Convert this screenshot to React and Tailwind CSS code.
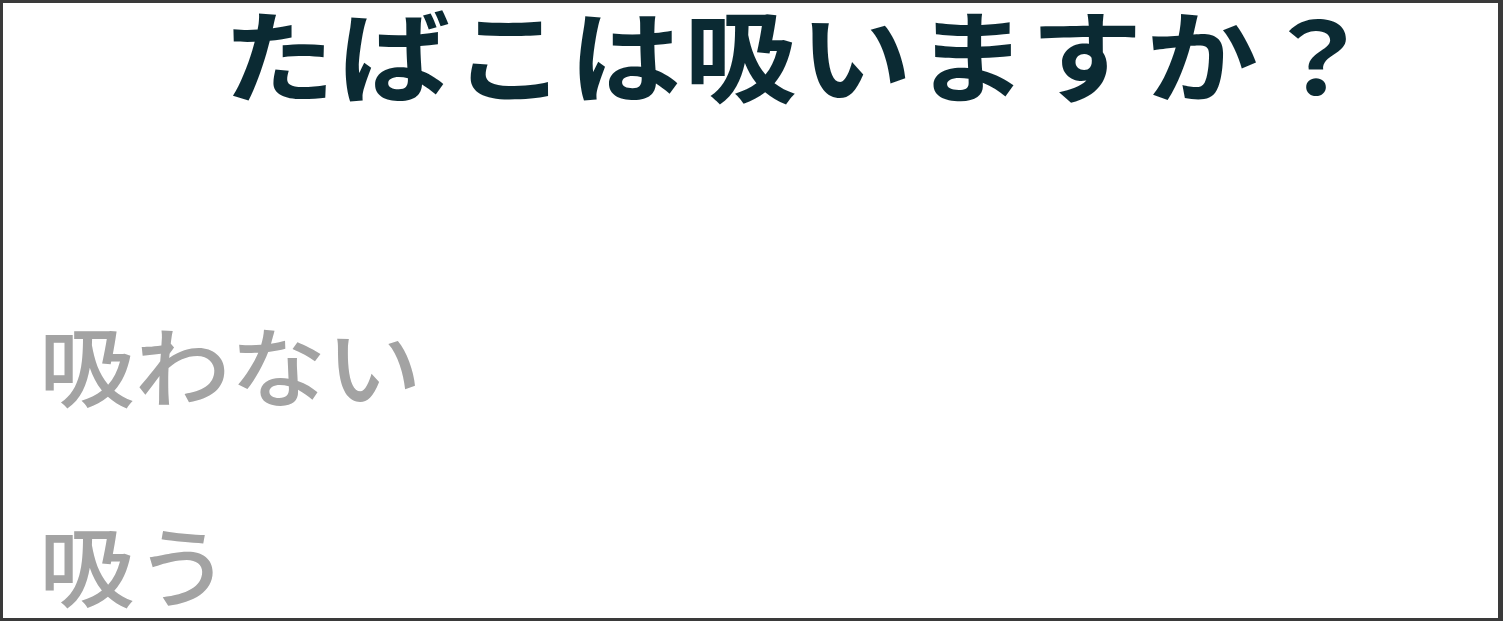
import React from 'react';

const options = ['吸わない', '吸う'];

const App = () => {
  return (
    <div
      className="h-[621px] w-full overflow-hidden bg-white border-t-[3px] border-l-[3px] border-r-[5px] border-b-[3px] border-[#3a3a3a]"
      style={{ fontFamily: '"Noto Sans CJK JP", "Noto Sans", sans-serif' }}
    >
      <h1 className="pl-[220px] h-[104px] text-[100px] leading-[98px] font-semibold text-[#0b2a33]">
        <span className="inline-block origin-left scale-x-[1.12] tracking-[3px] whitespace-nowrap">
          たばこは吸いますか？
        </span>
      </h1>
      <ul className="mt-[213px] pl-[36px] text-[#a3a3a3] text-[87px] leading-none font-medium">
        {options.map((label) => (
          <li key={label} className="h-[200px]">
            <span className="inline-block origin-left scale-x-[1.1]">{label}</span>
          </li>
        ))}
      </ul>
    </div>
  );
};

export default App;
